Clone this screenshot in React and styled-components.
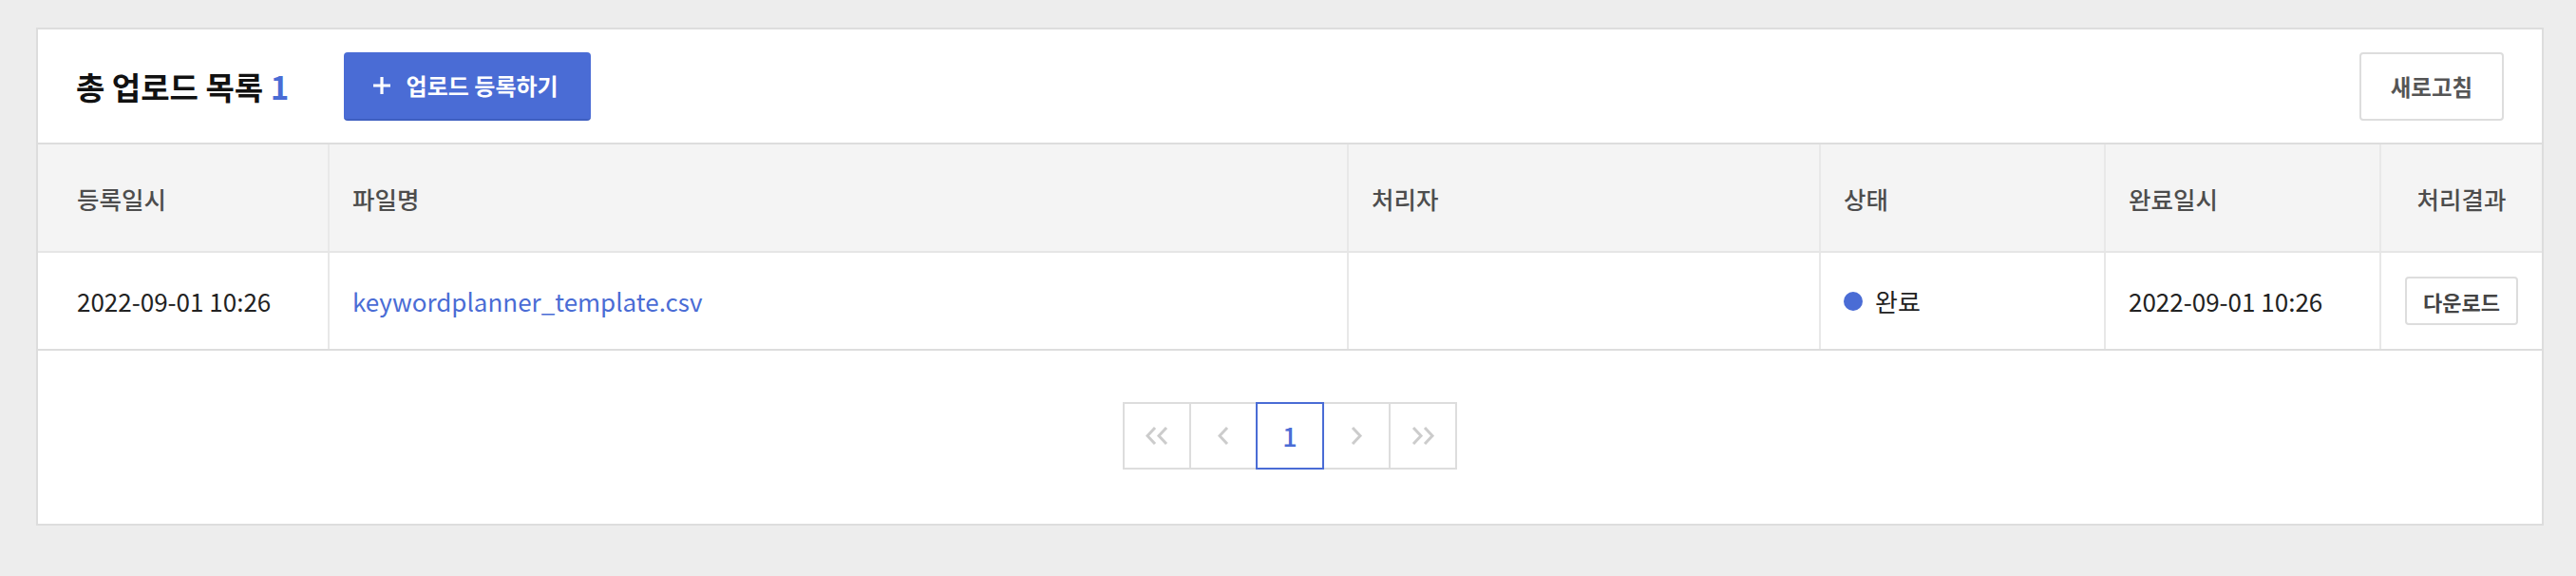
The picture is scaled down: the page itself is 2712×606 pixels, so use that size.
import React from "react";
import styled, { createGlobalStyle } from "styled-components";

const Global = createGlobalStyle`
  body {
    margin: 0;
    padding: 0;
    background: #ededed;
    font-family: "Noto Sans CJK KR", "Noto Sans", sans-serif;
  }
`;

const BLUE = "#4a6cd5";

const Page = styled.div`
  padding: 29px 34px 0 38px;
`;

const Card = styled.section`
  background: #fff;
  border: 2px solid #dddddd;
`;

const Header = styled.header`
  display: flex;
  align-items: center;
  height: 119px;
  padding: 0 40px 0 40px;
  border-bottom: 2px solid #dddddd;
`;

const Title = styled.h2`
  margin: 0 58px 0 0;
  font-size: 33px;
  font-weight: 700;
  color: #111;

  span {
    color: ${BLUE};
  }
`;

const AddButton = styled.button`
  display: flex;
  align-items: center;
  justify-content: center;
  gap: 17px;
  width: 260px;
  height: 72px;
  padding: 0 4px 0 0;
  border: none;
  border-bottom: 2px solid #3f5fc0;
  border-radius: 4px;
  background: ${BLUE};
  color: #fff;
  font-family: inherit;
  font-size: 24px;
  font-weight: 700;
  cursor: pointer;
`;

const RefreshButton = styled.button`
  margin-left: auto;
  width: 152px;
  height: 72px;
  border: 2px solid #dddddd;
  border-radius: 4px;
  background: #fff;
  color: #555;
  font-family: inherit;
  font-size: 23.5px;
  font-weight: 700;
  cursor: pointer;
`;

const Row = styled.div`
  display: grid;
  grid-template-columns: 305px 1073px 497px 300px 290px 1fr;
  height: ${({ head }) => (head ? "112px" : "101px")};
  background: ${({ head }) => (head ? "#f4f4f4" : "#fff")};
  border-bottom: 2px solid ${({ head }) => (head ? "#e6e6e6" : "#dddddd")};
`;

const Cell = styled.div`
  display: flex;
  align-items: center;
  justify-content: ${({ center }) => (center ? "center" : "flex-start")};
  padding-left: ${({ center }) => (center ? "0" : "24px")};
  border-left: 2px solid #e8e8e8;
  font-size: ${({ head }) => (head ? "25.5px" : "26px")};
  color: ${({ head }) => (head ? "#4d4d4d" : "#222")};
  font-weight: ${({ head }) => (head ? 500 : 400)};

  &:first-child {
    border-left: none;
    padding-left: 41px;
  }
`;

const FileLink = styled.a`
  color: ${BLUE};
  text-decoration: none;
`;

const Status = styled.span`
  display: flex;
  align-items: center;
  gap: 13px;

  &::before {
    content: "";
    width: 20px;
    height: 20px;
    border-radius: 50%;
    background: ${BLUE};
  }
`;

const DownloadButton = styled.button`
  width: 119px;
  height: 51px;
  border: 2px solid #dddddd;
  border-radius: 4px;
  background: #fff;
  color: #444;
  font-family: inherit;
  font-size: 22px;
  font-weight: 700;
  cursor: pointer;
`;

const Pager = styled.nav`
  display: flex;
  justify-content: center;
  padding: 54px 0 57px;
`;

const PageButton = styled.button`
  position: relative;
  z-index: ${({ active }) => (active ? 1 : 0)};
  display: flex;
  align-items: center;
  justify-content: center;
  width: 72px;
  height: 71px;
  margin-left: -2px;
  padding: 0;
  border: 2px solid ${({ active }) => (active ? BLUE : "#dddddd")};
  background: #fff;
  color: ${BLUE};
  font-family: inherit;
  font-size: 27px;
  font-weight: 500;
  cursor: pointer;

  &:first-child {
    margin-left: 0;
  }
`;

const Chevron = ({ dir = "left", double }) => {
  const w = double ? 25 : 13;
  const one = (x) =>
    dir === "left"
      ? `M${x + 10} 1 L${x + 2} 9.5 L${x + 10} 18`
      : `M${x + 2} 1 L${x + 10} 9.5 L${x + 2} 18`;
  return (
    <svg width={w} height="20" viewBox={`0 0 ${w} 20`} fill="none">
      <path d={one(0)} stroke="#cccccc" strokeWidth="3" />
      {double && <path d={one(12)} stroke="#cccccc" strokeWidth="3" />}
    </svg>
  );
};

const Plus = () => (
  <svg width="18" height="18" viewBox="0 0 18 18">
    <path d="M9 0 V18 M0 9 H18" stroke="#fff" strokeWidth="3.2" />
  </svg>
);

const columns = ["등록일시", "파일명", "처리자", "상태", "완료일시", "처리결과"];

export default function App() {
  return (
    <Page>
      <Global />
      <Card>
        <Header>
          <Title>
            총 업로드 목록 <span>1</span>
          </Title>
          <AddButton>
            <Plus />
            업로드 등록하기
          </AddButton>
          <RefreshButton>새로고침</RefreshButton>
        </Header>

        <Row head>
          {columns.map((c, i) => (
            <Cell head key={c} center={i === 5}>
              {c}
            </Cell>
          ))}
        </Row>
        <Row>
          <Cell>2022-09-01 10:26</Cell>
          <Cell>
            <FileLink href="#">keywordplanner_template.csv</FileLink>
          </Cell>
          <Cell />
          <Cell>
            <Status>완료</Status>
          </Cell>
          <Cell>2022-09-01 10:26</Cell>
          <Cell center>
            <DownloadButton>다운로드</DownloadButton>
          </Cell>
        </Row>

        <Pager>
          <PageButton>
            <Chevron dir="left" double />
          </PageButton>
          <PageButton>
            <Chevron dir="left" />
          </PageButton>
          <PageButton active>1</PageButton>
          <PageButton>
            <Chevron dir="right" />
          </PageButton>
          <PageButton>
            <Chevron dir="right" double />
          </PageButton>
        </Pager>
      </Card>
    </Page>
  );
}
